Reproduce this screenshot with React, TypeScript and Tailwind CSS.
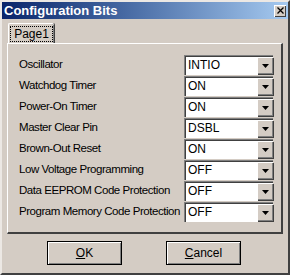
const rows: { label: string; value: string }[] = [
  { label: "Oscillator", value: "INTIO" },
  { label: "Watchdog Timer", value: "ON" },
  { label: "Power-On Timer", value: "ON" },
  { label: "Master Clear Pin", value: "DSBL" },
  { label: "Brown-Out Reset", value: "ON" },
  { label: "Low Voltage Programming", value: "OFF" },
  { label: "Data EEPROM Code Protection", value: "OFF" },
  { label: "Program Memory Code Protection", value: "OFF" },
];

function Combo({ value }: { value: string }) {
  return (
    <div className="flex h-[20px] w-[89px] shrink-0 border-t border-l border-[#808080] bg-white">
      <div className="flex flex-1 border-t border-l border-[#404040]">
        <span className="flex-1 pl-[2px] text-[12px] leading-[17px]">{value}</span>
        <div className="flex h-[17px] w-[16px] items-center justify-center border-t border-l border-white bg-[#d4ccc4] shadow-[inset_-1px_-1px_0_#808080,1px_1px_0_#404040]">
          <svg width="7" height="4" viewBox="0 0 7 4">
            <path d="M0 0h7L3.5 4z" fill="#000" />
          </svg>
        </div>
      </div>
    </div>
  );
}

function Button({ children }: { children: React.ReactNode }) {
  return (
    <button className="flex h-[24px] w-[75px] items-center justify-center border border-black bg-[#d4ccc4] text-[12px] shadow-[inset_1px_1px_0_#fff,inset_-1px_-1px_0_#808080]">
      {children}
    </button>
  );
}

export default function App() {
  return (
    <div
      className="h-[275px] w-[290px] bg-[#d4ccc4] text-[12px] text-black border-t-2 border-l-2 border-t-[#ece8e4] border-l-[#ece8e4] border-r-2 border-b-2 border-r-[#404040] border-b-[#404040]"
      style={{ fontFamily: '"Liberation Sans", Arial, sans-serif' }}
    >
      <div className="flex h-[17px] items-center justify-between bg-gradient-to-r from-[#0a246a] to-[#a6caf0] pl-[2px] pr-[2px]">
        <span className="text-[13px] font-bold text-white">Configuration Bits</span>
        <div className="flex h-[12px] w-[12px] items-center justify-center bg-[#d4ccc4] shadow-[inset_1px_1px_0_#fff,inset_-1px_-1px_0_#404040]">
          <svg width="7" height="7" viewBox="0 0 7 7">
            <path d="M0.5 0.5l6 6M6.5 0.5l-6 6" stroke="#000" strokeWidth="1.3" />
          </svg>
        </div>
      </div>

      <div className="ml-[5px] mt-[4px]">
        <div className="flex">
          <div className="ml-[1px] flex h-[20px] w-[46px] items-center justify-center rounded-t-[2px] border-t border-l border-white shadow-[1px_0_0_#404040,inset_-1px_0_0_#808080]">
            <span className="border border-dotted border-black px-[3px] leading-[14px]">Page1</span>
          </div>
        </div>
        <div className="h-[191px] w-[276px] border-t border-l border-white border-r-2 border-b-2 border-r-[#404040] border-b-[#404040] pl-[11px] pr-[8px] pt-[11px]">
          <div className="flex flex-col gap-[1px]">
            {rows.map((r) => (
              <div key={r.label} className="flex h-[20px] items-center justify-between">
                <span className="whitespace-nowrap text-[11.5px] tracking-[-0.45px]">{r.label}</span>
                <Combo value={r.value} />
              </div>
            ))}
          </div>
        </div>
      </div>

      <div className="ml-[45px] mt-[7px] flex gap-[44px]">
        <Button>
          <span><u>O</u>K</span>
        </Button>
        <Button>
          <span><u>C</u>ancel</span>
        </Button>
      </div>
    </div>
  );
}
